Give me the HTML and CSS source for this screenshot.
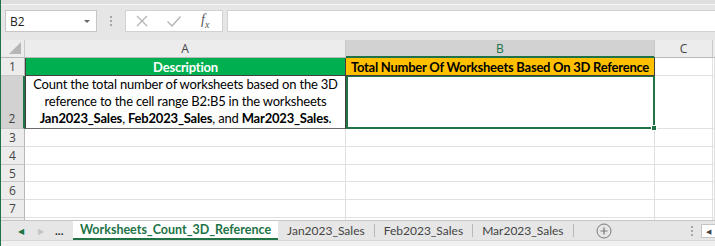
FILE: index.html
```html
<!DOCTYPE html>
<html lang="en">
<head>
    <meta charset="UTF-8">
    <meta name="viewport" content="width=device-width, initial-scale=1.0">
    <link rel="stylesheet" href="styles.css">
    <title>Worksheets_Count_3D_Reference</title>
</head>
<body>
    <div class="app">
        <div class="top-strip"></div>

        <div class="formula-bar">
            <div class="name-box">
                <span>B2</span>
                <span class="caret"></span>
            </div>
            <div class="grip">
                <span></span><span></span><span></span>
            </div>
            <div class="fx-box">
                <svg class="fx-icon" width="14" height="14" viewBox="0 0 14 14">
                    <path d="M2 2 L12 12 M12 2 L2 12" stroke="#b4b4b4" stroke-width="1.3" fill="none"/>
                </svg>
                <svg class="fx-icon" width="16" height="14" viewBox="0 0 16 14">
                    <path d="M1.5 7.5 L6 12 L14.5 2.5" stroke="#b4b4b4" stroke-width="1.4" fill="none"/>
                </svg>
                <span class="fx-label">f<sub>x</sub></span>
            </div>
            <div class="formula-input"></div>
        </div>

        <div class="sheet">
            <div class="hd corner"><span class="corner-mark"></span></div>
            <div class="hd">A</div>
            <div class="hd hd-active">B</div>
            <div class="hd">C</div>
            <div class="hd hd-end"></div>

            <div class="rh">1</div>
            <div class="cell title-green">Description</div>
            <div class="cell title-yellow">Total Number Of Worksheets Based On 3D Reference</div>
            <div class="cell"></div>
            <div class="cell"></div>

            <div class="rh rh-active rh-tall">2</div>
            <div class="cell desc">
                <p class="desc-text">Count the total number of worksheets based on the 3D<br>reference to the cell range B2:B5 in the worksheets<br><b>Jan2023_Sales</b>, <b>Feb2023_Sales</b>, and <b>Mar2023_Sales</b>.</p>
            </div>
            <div class="cell selected"></div>
            <div class="cell"></div>
            <div class="cell"></div>

            <div class="rh">3</div>
            <div class="cell"></div><div class="cell"></div><div class="cell"></div><div class="cell"></div>
            <div class="rh">4</div>
            <div class="cell"></div><div class="cell"></div><div class="cell"></div><div class="cell"></div>
            <div class="rh">5</div>
            <div class="cell"></div><div class="cell"></div><div class="cell"></div><div class="cell"></div>
            <div class="rh">6</div>
            <div class="cell"></div><div class="cell"></div><div class="cell"></div><div class="cell"></div>
            <div class="rh">7</div>
            <div class="cell"></div><div class="cell"></div><div class="cell"></div><div class="cell"></div>
            <div class="rh">8</div>
            <div class="cell"></div><div class="cell"></div><div class="cell"></div><div class="cell"></div>
        </div>

        <div class="tab-bar">
            <div class="tab-nav">
                <span class="nav-prev">&#9664;</span>
                <span class="nav-next">&#9654;</span>
                <span class="nav-more">...</span>
            </div>
            <div class="tab active">Worksheets_Count_3D_Reference</div>
            <div class="tab">Jan2023_Sales</div>
            <div class="tab">Feb2023_Sales</div>
            <div class="tab">Mar2023_Sales</div>
            <div class="add-sheet">
                <svg width="16" height="16" viewBox="0 0 16 16">
                    <circle cx="8" cy="8" r="7" stroke="#7a7a7a" stroke-width="1" fill="none"/>
                    <path d="M8 4.5 V11.5 M4.5 8 H11.5" stroke="#7a7a7a" stroke-width="1.2"/>
                </svg>
            </div>
            <div class="tab-spacer"></div>
            <div class="grip grip-tabs">
                <span></span><span></span><span></span>
            </div>
            <div class="hscroll"><span>&#9664;</span></div>
        </div>

        <div class="status-bar"></div>
    </div>
</body>
</html>
```

FILE: styles.css
```css
*,
*::before,
*::after {
    box-sizing: border-box;
}

body {
    margin: 0;
    width: 715px;
    height: 246px;
    overflow: hidden;
    font-family: "Open Sans", "Noto Sans", sans-serif;
    background: #e6e6e6;
}

.app {
    height: 246px;
    border-left: 1px solid #217346;
    display: flex;
    flex-direction: column;
}

.top-strip {
    height: 5px;
    background: #dedede;
    border-bottom: 1px solid #f4f4f4;
    flex: none;
}

.formula-bar {
    height: 35px;
    flex: none;
    display: flex;
    align-items: flex-start;
    padding: 5px 0 0 4px;
    background: #e6e6e6;
}

.name-box {
    width: 92px;
    height: 22px;
    background: #fff;
    border: 1px solid #c6c6c6;
    display: flex;
    align-items: center;
    justify-content: space-between;
    padding: 0 6px 0 4px;
    font-size: 12px;
    color: #222;
}

.caret {
    width: 0;
    height: 0;
    border-left: 3px solid transparent;
    border-right: 3px solid transparent;
    border-top: 3px solid #666;
}

.grip {
    width: 28px;
    height: 22px;
    display: flex;
    flex-direction: column;
    align-items: center;
    justify-content: center;
    gap: 2px;
}

.grip span {
    width: 2px;
    height: 2px;
    background: #a6a6a6;
}

.fx-box {
    width: 98px;
    height: 22px;
    background: #fff;
    border: 1px solid #d2d2d2;
    display: flex;
    align-items: center;
    padding-left: 9px;
    gap: 17px;
}

.fx-label {
    font-family: "Liberation Serif", serif;
    font-style: italic;
    font-size: 14px;
    color: #555;
    margin-left: 2px;
}

.fx-label sub {
    font-size: 10px;
}

.formula-input {
    flex: 1;
    height: 22px;
    margin-left: 4px;
    background: #fff;
    border: 1px solid #d2d2d2;
    border-right: none;
}

.sheet {
    height: 180px;
    flex: none;
    overflow: hidden;
    display: grid;
    grid-template-columns: 24px 321px 309px 58px 1fr;
    grid-template-rows: 18px 18px 53px 18px 18px 17px 18px 18px 18px;
    background: #fff;
}

.hd {
    background: #ececec;
    border-right: 1px solid #c8c8c8;
    border-bottom: 1px solid #b8b8b8;
    font-size: 12px;
    color: #444;
    display: flex;
    align-items: center;
    justify-content: center;
}

.hd-active {
    background: #d2d2d2;
    color: #217346;
    border-bottom: 2px solid #217346;
}

.hd-end {
    border-right: none;
}

.corner {
    position: relative;
    background: #ececec;
}

.corner-mark {
    position: absolute;
    right: 3px;
    bottom: 3px;
    width: 0;
    height: 0;
    border-left: 12px solid transparent;
    border-bottom: 12px solid #b6b6b6;
}

.rh {
    background: #ececec;
    border-right: 1px solid #b8b8b8;
    border-bottom: 1px solid #c8c8c8;
    font-size: 12px;
    color: #444;
    display: flex;
    align-items: center;
    justify-content: center;
}

.rh-tall {
    align-items: flex-end;
    padding-bottom: 1px;
}

.rh-active {
    background: #d2d2d2;
    border-right: 2px solid #217346;
}

.cell {
    border-right: 1px solid #e1e1e1;
    border-bottom: 1px solid #e1e1e1;
    font-family: Lato, "Open Sans", sans-serif;
    font-size: 13px;
    letter-spacing: -0.2px;
    color: #000;
    white-space: nowrap;
}

.title-green {
    background: #00b050;
    color: #fff;
    font-weight: 700;
    display: flex;
    align-items: center;
    justify-content: center;
    border: 1px solid #404040;
    border-top: none;
}

.title-yellow {
    background: #ffc000;
    font-weight: 700;
    letter-spacing: -0.25px;
    display: flex;
    align-items: center;
    justify-content: center;
    border-right: 1px solid #404040;
    border-bottom: 1px solid #404040;
}

.desc {
    display: flex;
    align-items: flex-end;
    justify-content: center;
    padding-bottom: 1px;
    border-left: 1px solid #404040;
    border-right: 1px solid #404040;
    border-bottom: 1px solid #6a6a6a;
}

.desc-text {
    margin: 0;
    text-align: center;
    line-height: 17px;
}

.selected {
    position: relative;
    border: 2px solid #217346;
    border-top-width: 1px;
}

.selected::after {
    content: "";
    position: absolute;
    right: -4px;
    bottom: -4px;
    width: 6px;
    height: 6px;
    background: #217346;
    border: 1px solid #fff;
}

.tab-bar {
    height: 20px;
    flex: none;
    display: flex;
    align-items: stretch;
    background: #e6e6e6;
    border-top: 1px solid #c6c6c6;
    font-family: Lato, "Open Sans", sans-serif;
    font-size: 12px;
    color: #444;
}

.tab-nav {
    width: 72px;
    display: flex;
    align-items: center;
    padding-left: 17px;
    line-height: 1;
}

.nav-prev {
    font-size: 8px;
    color: #217346;
}

.nav-next {
    font-size: 8px;
    color: #c4c4c4;
    margin-left: 14px;
}

.nav-more {
    font-weight: 700;
    color: #333;
    margin-left: 11px;
}

.tab {
    display: flex;
    align-items: center;
    padding: 0 9px;
    border-right: 1px solid #b9b9b9;
    margin: 3px 0;
}

.tab.active {
    margin: 0;
    padding: 0 7px;
    background: #fff;
    color: #217346;
    font-weight: 700;
    font-size: 12.5px;
    border-right: none;
    border-bottom: 2px solid #217346;
}

.add-sheet {
    display: flex;
    align-items: center;
    margin-left: 22px;
}

.tab-spacer {
    flex: 1;
}

.grip-tabs {
    width: 18px;
    height: auto;
}

.hscroll {
    width: 14px;
    margin: 3px 0 2px;
    background: #fff;
    border: 1px solid #c6c6c6;
    border-right: none;
    display: flex;
    align-items: center;
    justify-content: center;
    font-size: 7px;
    color: #444;
}

.status-bar {
    flex: 1;
    background: #f0f0f0;
    border-top: 1px solid #d6d6d6;
}
```
